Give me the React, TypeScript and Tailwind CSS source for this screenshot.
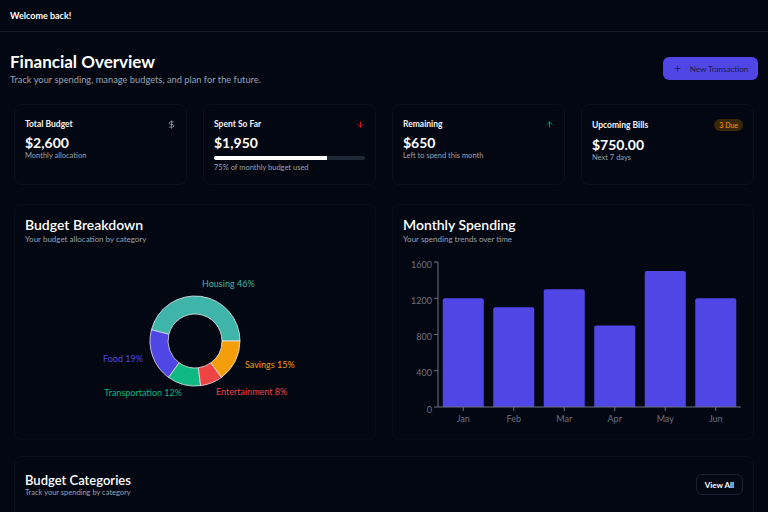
import { ArrowDown, ArrowUp, DollarSign, Plus } from 'lucide-react';

const slices = [
  { name: 'Housing', value: 46, color: '#3fb5a9', lx: 177, ly: 39, anchor: 'start' },
  { name: 'Food', value: 19, color: '#4f46e5', lx: 118, ly: 114, anchor: 'end' },
  { name: 'Transportation', value: 12, color: '#10b981', lx: 157, ly: 148, anchor: 'end' },
  { name: 'Entertainment', value: 8, color: '#ef4444', lx: 191, ly: 147, anchor: 'start' },
  { name: 'Savings', value: 15, color: '#f59e0b', lx: 220, ly: 120, anchor: 'start' },
] as const;

const months = [
  { m: 'Jan', v: 1200 },
  { m: 'Feb', v: 1100 },
  { m: 'Mar', v: 1300 },
  { m: 'Apr', v: 900 },
  { m: 'May', v: 1500 },
  { m: 'Jun', v: 1200 },
];

// arc path, angles in degrees, counter-clockwise from 3 o'clock
function arc(cx: number, cy: number, r0: number, r1: number, a0: number, a1: number) {
  const p = (r: number, a: number) => {
    const t = (a * Math.PI) / 180;
    return `${(cx + r * Math.cos(t)).toFixed(2)} ${(cy - r * Math.sin(t)).toFixed(2)}`;
  };
  const large = a1 - a0 > 180 ? 1 : 0;
  return `M ${p(r1, a0)} A ${r1} ${r1} 0 ${large} 0 ${p(r1, a1)} L ${p(r0, a1)} A ${r0} ${r0} 0 ${large} 1 ${p(r0, a0)} Z`;
}

function Donut() {
  let a = 0;
  return (
    <svg width={342} height={190} className="block">
      {slices.map((s) => {
        const a0 = a;
        const a1 = a + (s.value / 100) * 360;
        a = a1;
        return <path key={s.name} d={arc(170, 97, 27, 45, a0, a1)} fill={s.color} stroke="#e5e7eb" strokeWidth={0.8} />;
      })}
      {slices.map((s) => (
        <text key={s.name + 'l'} x={s.lx} y={s.ly} fill={s.color} fontSize={9} textAnchor={s.anchor} dominantBaseline="central">
          {s.name} {s.value}%
        </text>
      ))}
    </svg>
  );
}

function Bars() {
  const y0 = 161;
  const k = 145 / 1600;
  const x0 = 35;
  const band = 50.5;
  return (
    <svg width={342} height={190} className="block mt-[2px]">
      {[0, 400, 800, 1200, 1600].map((t) => (
        <g key={t}>
          <line x1={x0 - 4} x2={x0} y1={y0 - t * k} y2={y0 - t * k} stroke="#6b7280" />
          <text x={x0 - 6} y={y0 - t * k + 2} fill="#6b7280" fontSize={9} textAnchor="end" dominantBaseline="central">
            {t}
          </text>
        </g>
      ))}
      {months.map((d, i) => {
        const cx = x0 + band * (i + 0.5);
        const h = d.v * k;
        return (
          <g key={d.m}>
            <path
              d={`M ${cx - 20.5} ${y0} V ${y0 - h + 2} Q ${cx - 20.5} ${y0 - h} ${cx - 18.5} ${y0 - h} H ${cx + 18.5} Q ${cx + 20.5} ${y0 - h} ${cx + 20.5} ${y0 - h + 2} V ${y0} Z`}
              fill="#4f46e5"
            />
            <line x1={cx} x2={cx} y1={y0} y2={y0 + 4} stroke="#6b7280" />
            <text x={cx} y={y0 + 11} fill="#6b7280" fontSize={9} textAnchor="middle" dominantBaseline="central">
              {d.m}
            </text>
          </g>
        );
      })}
      <line x1={x0} x2={x0} y1={16} y2={y0} stroke="#6b7280" />
      <line x1={x0} x2={338} y1={y0} y2={y0} stroke="#6b7280" />
    </svg>
  );
}

function StatCard({ title, right, value, sub, children }: { title: string; right: React.ReactNode; value: string; sub: string; children?: React.ReactNode }) {
  return (
    <div className="h-[81px] rounded-lg border border-[#0a101e] px-[10px] pt-[14px]">
      <div className="flex items-center justify-between">
        <span className="text-[8.5px] leading-[10px] font-bold text-gray-100">{title}</span>
        {right}
      </div>
      <div className="mt-[6px] text-[14px] leading-[16px] font-bold">{value}</div>
      {children}
      <div className="text-[7.5px] leading-[10px] text-gray-400">{sub}</div>
    </div>
  );
}

export default function App() {
  return (
    <div className="min-h-screen bg-[#030712] text-white font-['Lato','Noto_Sans',sans-serif]">
      <header className="h-[32px] border-b border-[#161c28] px-[10px] flex items-center">
        <span className="text-[9px] font-bold">Welcome back!</span>
      </header>

      <main className="px-[10px] pt-[18px]">
        <div className="flex items-start justify-between">
          <div>
            <h1 className="text-[17px] leading-[23px] font-bold">Financial Overview</h1>
            <p className="text-[9.3px] leading-[13px] text-gray-400">Track your spending, manage budgets, and plan for the future.</p>
          </div>
          <button className="mt-[7px] h-[23px] w-[95px] rounded-md bg-[#4f46e5] flex items-center justify-center gap-[8px] text-[8px] text-[#1e1b4b]">
            <Plus size={9} strokeWidth={2} />
            New Transaction
          </button>
        </div>

        <div className="mx-[4px] mt-[18px] grid grid-cols-4 gap-4">
          <StatCard title="Total Budget" right={<DollarSign size={9} className="text-gray-400" />} value="$2,600" sub="Monthly allocation" />
          <StatCard title="Spent So Far" right={<ArrowDown size={9} className="text-red-500" />} value="$1,950" sub="75% of monthly budget used">
            <div className="mt-[5px] mb-[3px] h-[4px] rounded-full bg-[#1f2937] overflow-hidden">
              <div className="h-full w-3/4 bg-white" />
            </div>
          </StatCard>
          <StatCard title="Remaining" right={<ArrowUp size={9} className="text-emerald-500" />} value="$650" sub="Left to spend this month" />
          <StatCard
            title="Upcoming Bills"
            right={<span className="rounded-full bg-[#3a2608] px-[5px] text-[7px] leading-[12px] text-amber-500">3 Due</span>}
            value="$750.00"
            sub="Next 7 days"
          />
        </div>

        <div className="mx-[4px] mt-[19px] grid grid-cols-2 gap-4">
          <div className="h-[236px] rounded-lg border border-[#080d1a] px-[10px] pt-[11px]">
            <h2 className="text-[14px] leading-[18px] font-semibold">Budget Breakdown</h2>
            <p className="text-[8px] leading-[10px] text-gray-400">Your budget allocation by category</p>
            <Donut />
          </div>
          <div className="h-[236px] rounded-lg border border-[#080d1a] px-[10px] pt-[11px]">
            <h2 className="text-[14px] leading-[18px] font-semibold">Monthly Spending</h2>
            <p className="text-[8px] leading-[10px] text-gray-400">Your spending trends over time</p>
            <Bars />
          </div>
        </div>

        <div className="mx-[4px] mt-[16px] rounded-lg border border-[#0a101e] px-[10px] pt-[15px] h-[80px]">
          <div className="flex items-center justify-between">
            <div>
              <h2 className="text-[13px] leading-[16px] font-semibold">Budget Categories</h2>
              <p className="text-[7.5px] leading-[9px] text-gray-400">Track your spending by category</p>
            </div>
            <button className="h-[21px] rounded-md border border-[#1a2130] px-[8px] text-[8px] font-bold">View All</button>
          </div>
        </div>
      </main>
    </div>
  );
}
